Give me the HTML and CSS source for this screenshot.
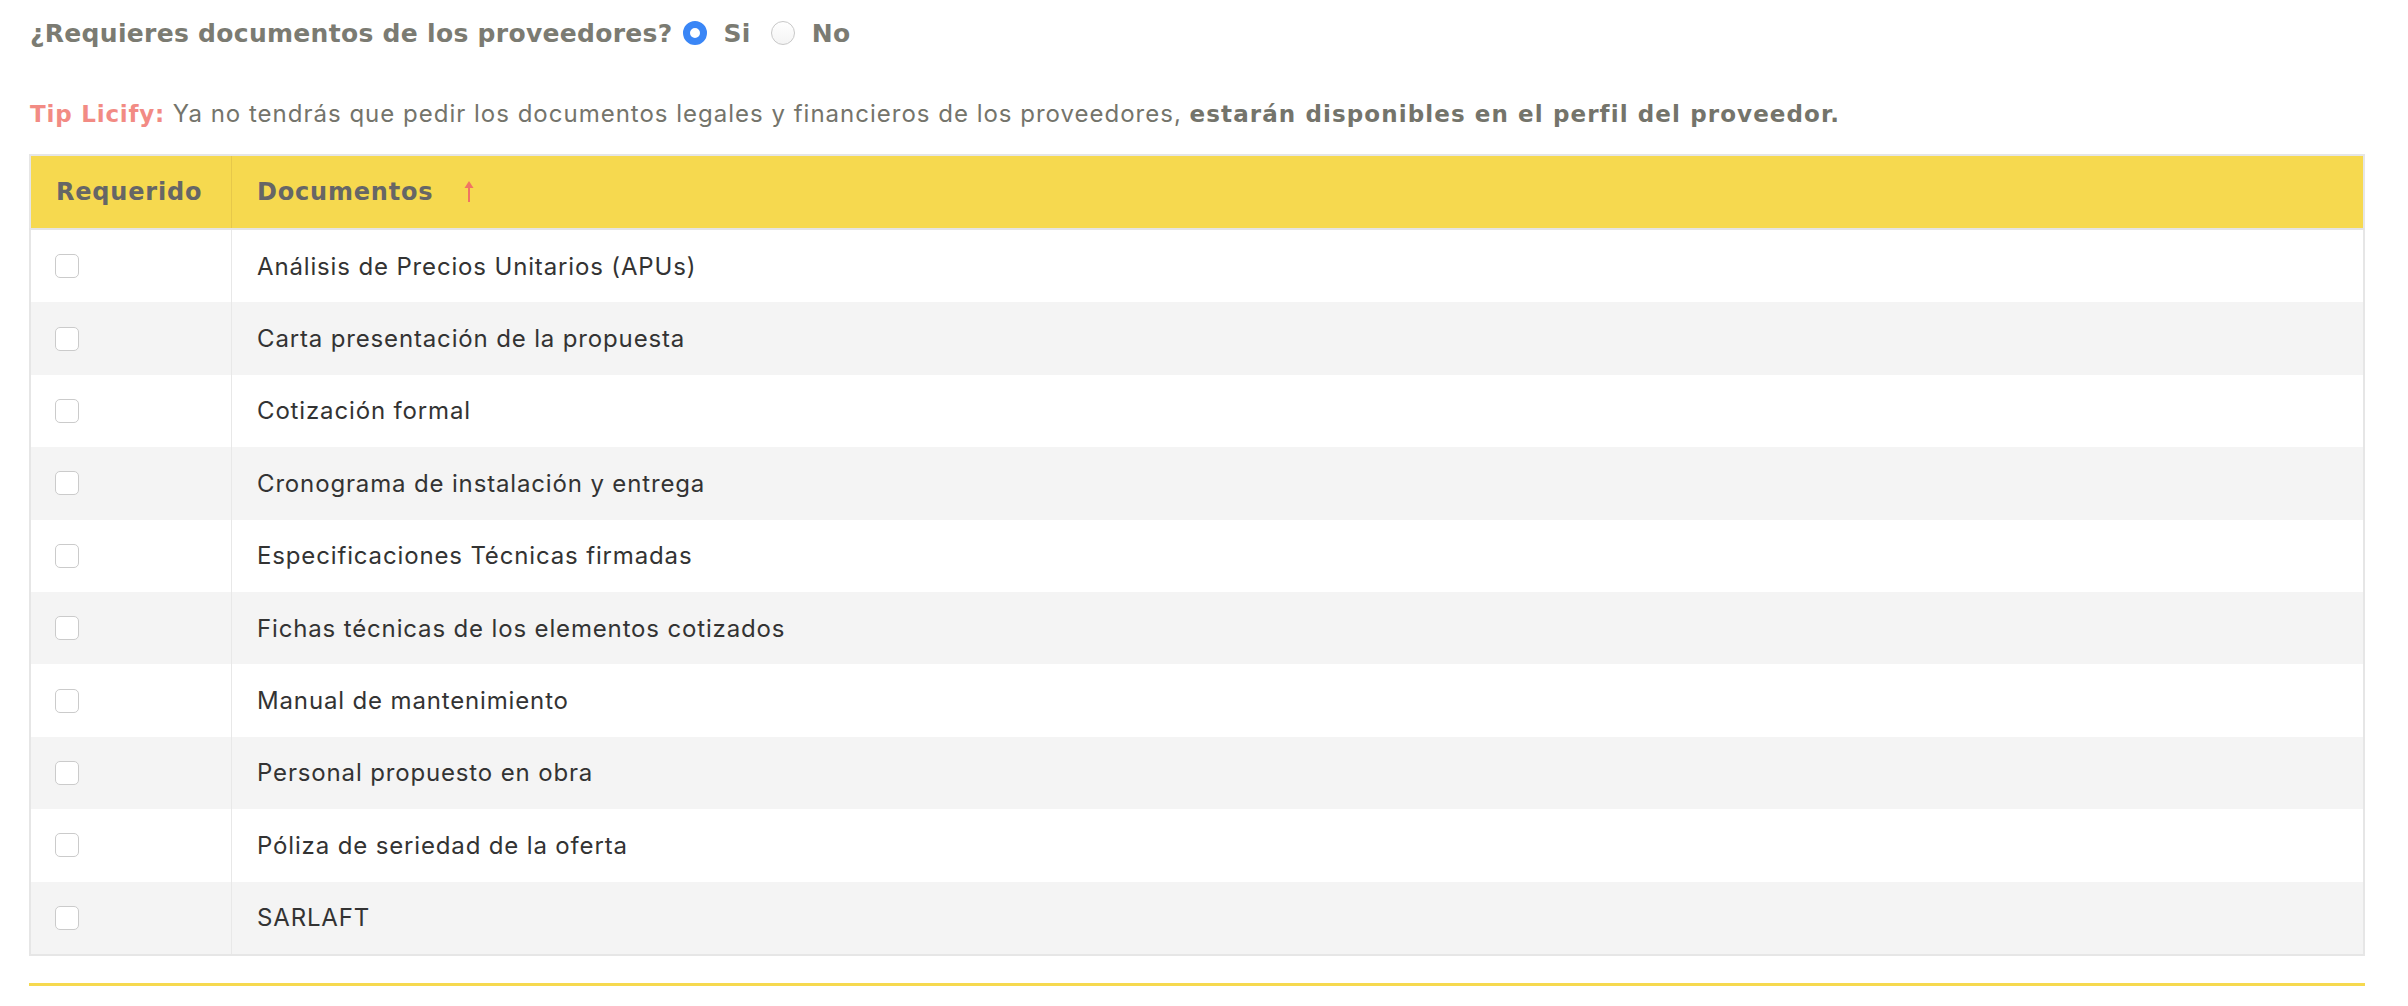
FILE: index.html
```html
<!DOCTYPE html>
<html lang="es">
<head>
    <meta charset="UTF-8">
    <meta name="viewport" content="width=device-width, initial-scale=1.0">
    <title>Documentos requeridos</title>
    <link rel="stylesheet" href="styles.css">
</head>
<body>
    <div class="page">
        <div class="question">
            <span class="question-text">¿Requieres documentos de los proveedores?</span>
            <label class="radio"><input type="radio" name="req" checked> Si</label>
            <label class="radio"><input type="radio" name="req"> No</label>
        </div>

        <p class="tip">
            <span class="tip-label">Tip Licify:</span>
            Ya no tendrás que pedir los documentos legales y financieros de los proveedores,
            <strong>estarán disponibles en el perfil del proveedor.</strong>
        </p>

        <table class="docs">
            <thead>
                <tr>
                    <th class="col-check">Requerido</th>
                    <th>Documentos
                        <svg class="sort-arrow" width="12" height="24" viewBox="0 0 12 24">
                            <path d="M6 23V4" stroke="#f07563" stroke-width="2" fill="none"/>
                            <path d="M1.5 9L6 2L10.5 9Z" fill="#f07563"/>
                        </svg>
                    </th>
                </tr>
            </thead>
            <tbody>
                <tr><td class="col-check"><input type="checkbox"></td><td>Análisis de Precios Unitarios (APUs)</td></tr>
                <tr><td class="col-check"><input type="checkbox"></td><td>Carta presentación de la propuesta</td></tr>
                <tr><td class="col-check"><input type="checkbox"></td><td>Cotización formal</td></tr>
                <tr><td class="col-check"><input type="checkbox"></td><td>Cronograma de instalación y entrega</td></tr>
                <tr><td class="col-check"><input type="checkbox"></td><td>Especificaciones Técnicas firmadas</td></tr>
                <tr><td class="col-check"><input type="checkbox"></td><td>Fichas técnicas de los elementos cotizados</td></tr>
                <tr><td class="col-check"><input type="checkbox"></td><td>Manual de mantenimiento</td></tr>
                <tr><td class="col-check"><input type="checkbox"></td><td>Personal propuesto en obra</td></tr>
                <tr><td class="col-check"><input type="checkbox"></td><td>Póliza de seriedad de la oferta</td></tr>
                <tr><td class="col-check"><input type="checkbox"></td><td>SARLAFT</td></tr>
            </tbody>
        </table>

        <div class="divider"></div>
    </div>
</body>
</html>
```

FILE: styles.css
```css
body {
    margin: 0;
    background: #ffffff;
    font-family: "Inter", "Liberation Sans", sans-serif;
    color: #333333;
}
.page {
    padding: 18px 43px 0 29px;
}
.question {
    display: flex;
    align-items: center;
    height: 30px;
    padding-left: 1px;
    font-family: "DejaVu Sans", sans-serif;
    font-weight: bold;
    font-size: 25px;
    letter-spacing: 0.3px;
    color: #7b7b72;
}
.question-text {
    margin-right: 10px;
}
.radio {
    display: flex;
    align-items: center;
    margin-right: 20px;
}
.radio input {
    appearance: none;
    -webkit-appearance: none;
    width: 24px;
    height: 24px;
    margin: 0 17px 0 0;
    border-radius: 50%;
    border: 1px solid #c8c8c8;
    background: linear-gradient(#ffffff, #f4f4f4);
}
.radio input:checked {
    border: 7px solid #3a86f6;
    background: #ffffff;
}
.tip {
    margin: 51px 0 0 1px;
    line-height: 30px;
    font-size: 24px;
    letter-spacing: 1px;
    color: #74746b;
}
.tip-label {
    font-family: "DejaVu Sans", sans-serif;
    font-weight: bold;
    font-size: 23px;
    color: #f28b84;
    letter-spacing: 0.8px;
}
.tip strong {
    font-family: "DejaVu Sans", sans-serif;
    font-size: 23px;
    letter-spacing: 1.1px;
    color: #74746b;
}
.docs {
    width: 100%;
    margin-top: 25px;
    border-collapse: collapse;
    border: 2px solid #e6e6e6;
}
.docs th {
    height: 72px;
    padding: 0 0 0 25px;
    background: #f6d94f;
    border-bottom: 2px solid #e4e4e4;
    text-align: left;
    font-family: "DejaVu Sans", sans-serif;
    font-weight: bold;
    font-size: 24px;
    letter-spacing: 0.8px;
    color: #666666;
}
.docs th.col-check {
    border-right: 1px solid #e6c84a;
}
.sort-arrow {
    margin-left: 20px;
    vertical-align: -3px;
}
.docs td {
    height: 72.4px;
    padding: 0 0 0 25px;
    font-size: 24px;
    letter-spacing: 0.85px;
    color: #333333;
}
.docs td.col-check {
    width: 176px;
    padding-left: 24px;
    border-right: 1px solid #e8e8e8;
}
.docs tbody tr:nth-child(even) {
    background: #f4f4f4;
}
.docs input[type="checkbox"] {
    appearance: none;
    -webkit-appearance: none;
    display: block;
    width: 24px;
    height: 24px;
    margin: 0;
    border: 1px solid #cbcbcb;
    border-radius: 5px;
    background: #ffffff;
}
.divider {
    margin-top: 27px;
    height: 3px;
    background: #f6d94f;
}
```
